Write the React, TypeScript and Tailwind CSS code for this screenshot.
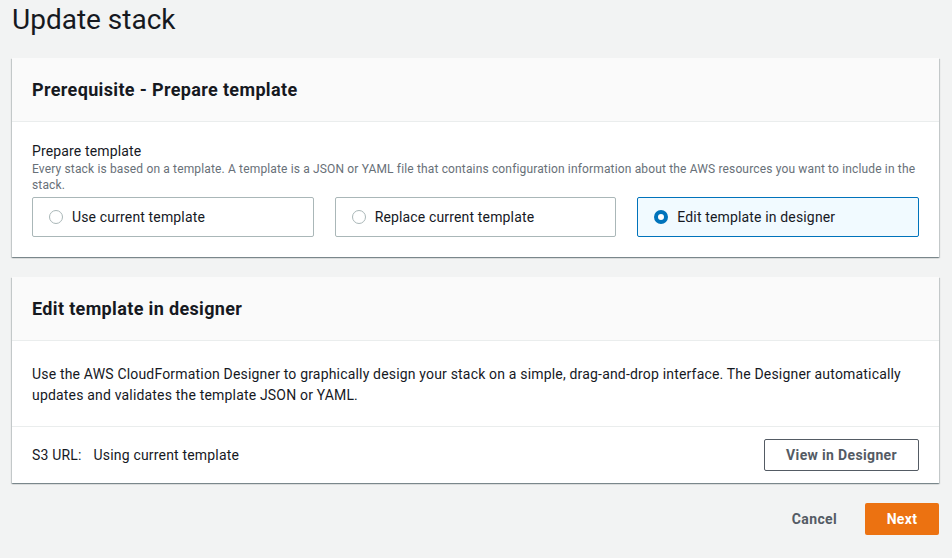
import React from 'react';

const font = { fontFamily: 'Roboto, "Open Sans", Arial, sans-serif' };

function Radio({ checked }: { checked?: boolean }) {
  if (checked) {
    return <span className="inline-block w-[14px] h-[14px] rounded-full border-[4px] border-[#0073bb] bg-white shrink-0" />;
  }
  return <span className="inline-block w-[14px] h-[14px] rounded-full border border-[#aab7b8] bg-white shrink-0" />;
}

function Tile({ label, checked }: { label: string; checked?: boolean }) {
  return (
    <div
      className={`flex-1 h-[40px] flex items-center gap-[9px] pl-[16px] border rounded-[2px] ${
        checked ? 'bg-[#f1faff] border-[#0073bb]' : 'bg-white border-[#aab7b8]'
      }`}
    >
      <Radio checked={checked} />
      <span className="text-[14px] tracking-[0.15px] text-[#16191f]">{label}</span>
    </div>
  );
}

export default function App() {
  return (
    <div className="min-h-[558px] bg-[#f2f3f3] px-[12px] pr-[13px] text-[#16191f]" style={font}>
      <h1 className="text-[28px] leading-[40px] font-normal">Update stack</h1>

      <div className="mt-[18px] bg-white shadow-[0_1px_1px_0_rgba(0,28,36,0.3),1px_1px_1px_0_rgba(0,28,36,0.15),-1px_1px_1px_0_rgba(0,28,36,0.15)]">
        <div className="h-[64px] bg-[#fafafa] border-b border-[#eaeded] flex items-center px-[20px]">
          <h2 className="text-[18px] tracking-[0.35px] font-bold">Prerequisite - Prepare template</h2>
        </div>
        <div className="px-[20px] pt-[19px] pb-[20px]">
          <div className="text-[14px] tracking-[0.15px] leading-[20px]">Prepare template</div>
          <div className="text-[12px] tracking-[0.15px] leading-[16px] text-[#687078]">
            Every stack is based on a template. A template is a JSON or YAML file that contains configuration information about the AWS resources you want to include in the stack.
          </div>
          <div className="flex gap-[21px] mt-[4px]">
            <Tile label="Use current template" />
            <Tile label="Replace current template" />
            <Tile label="Edit template in designer" checked />
          </div>
        </div>
      </div>

      <div className="mt-[20px] bg-white shadow-[0_1px_1px_0_rgba(0,28,36,0.3),1px_1px_1px_0_rgba(0,28,36,0.15),-1px_1px_1px_0_rgba(0,28,36,0.15)]">
        <div className="h-[64px] bg-[#fafafa] border-b border-[#eaeded] flex items-center px-[20px]">
          <h2 className="text-[18px] tracking-[0.35px] font-bold">Edit template in designer</h2>
        </div>
        <div className="px-[20px] pt-[23px] pb-[20px] border-b border-[#eaeded] text-[14px] tracking-[0.18px] leading-[21px]">
          Use the AWS CloudFormation Designer to graphically design your stack on a simple, drag-and-drop interface. The Designer automatically updates and validates the template JSON or YAML.
        </div>
        <div className="px-[20px] h-[56px] flex items-center justify-between text-[14px] tracking-[0.18px]">
          <div>
            <span>S3 URL:</span>
            <span className="ml-[12px]">Using current template</span>
          </div>
          <button className="h-[32px] px-[21px] border border-[#545b64] rounded-[2px] text-[14px] tracking-[0.35px] font-bold text-[#545b64] bg-white">
            View in Designer
          </button>
        </div>
      </div>

      <div className="flex justify-end items-center mt-[20px] gap-[8px]">
        <button className="h-[32px] px-[20px] text-[14px] tracking-[0.35px] font-bold text-[#545b64]">Cancel</button>
        <button className="h-[32px] w-[74px] rounded-[2px] bg-[#ec7211] text-white text-[14px] tracking-[0.35px] font-bold">Next</button>
      </div>
    </div>
  );
}
